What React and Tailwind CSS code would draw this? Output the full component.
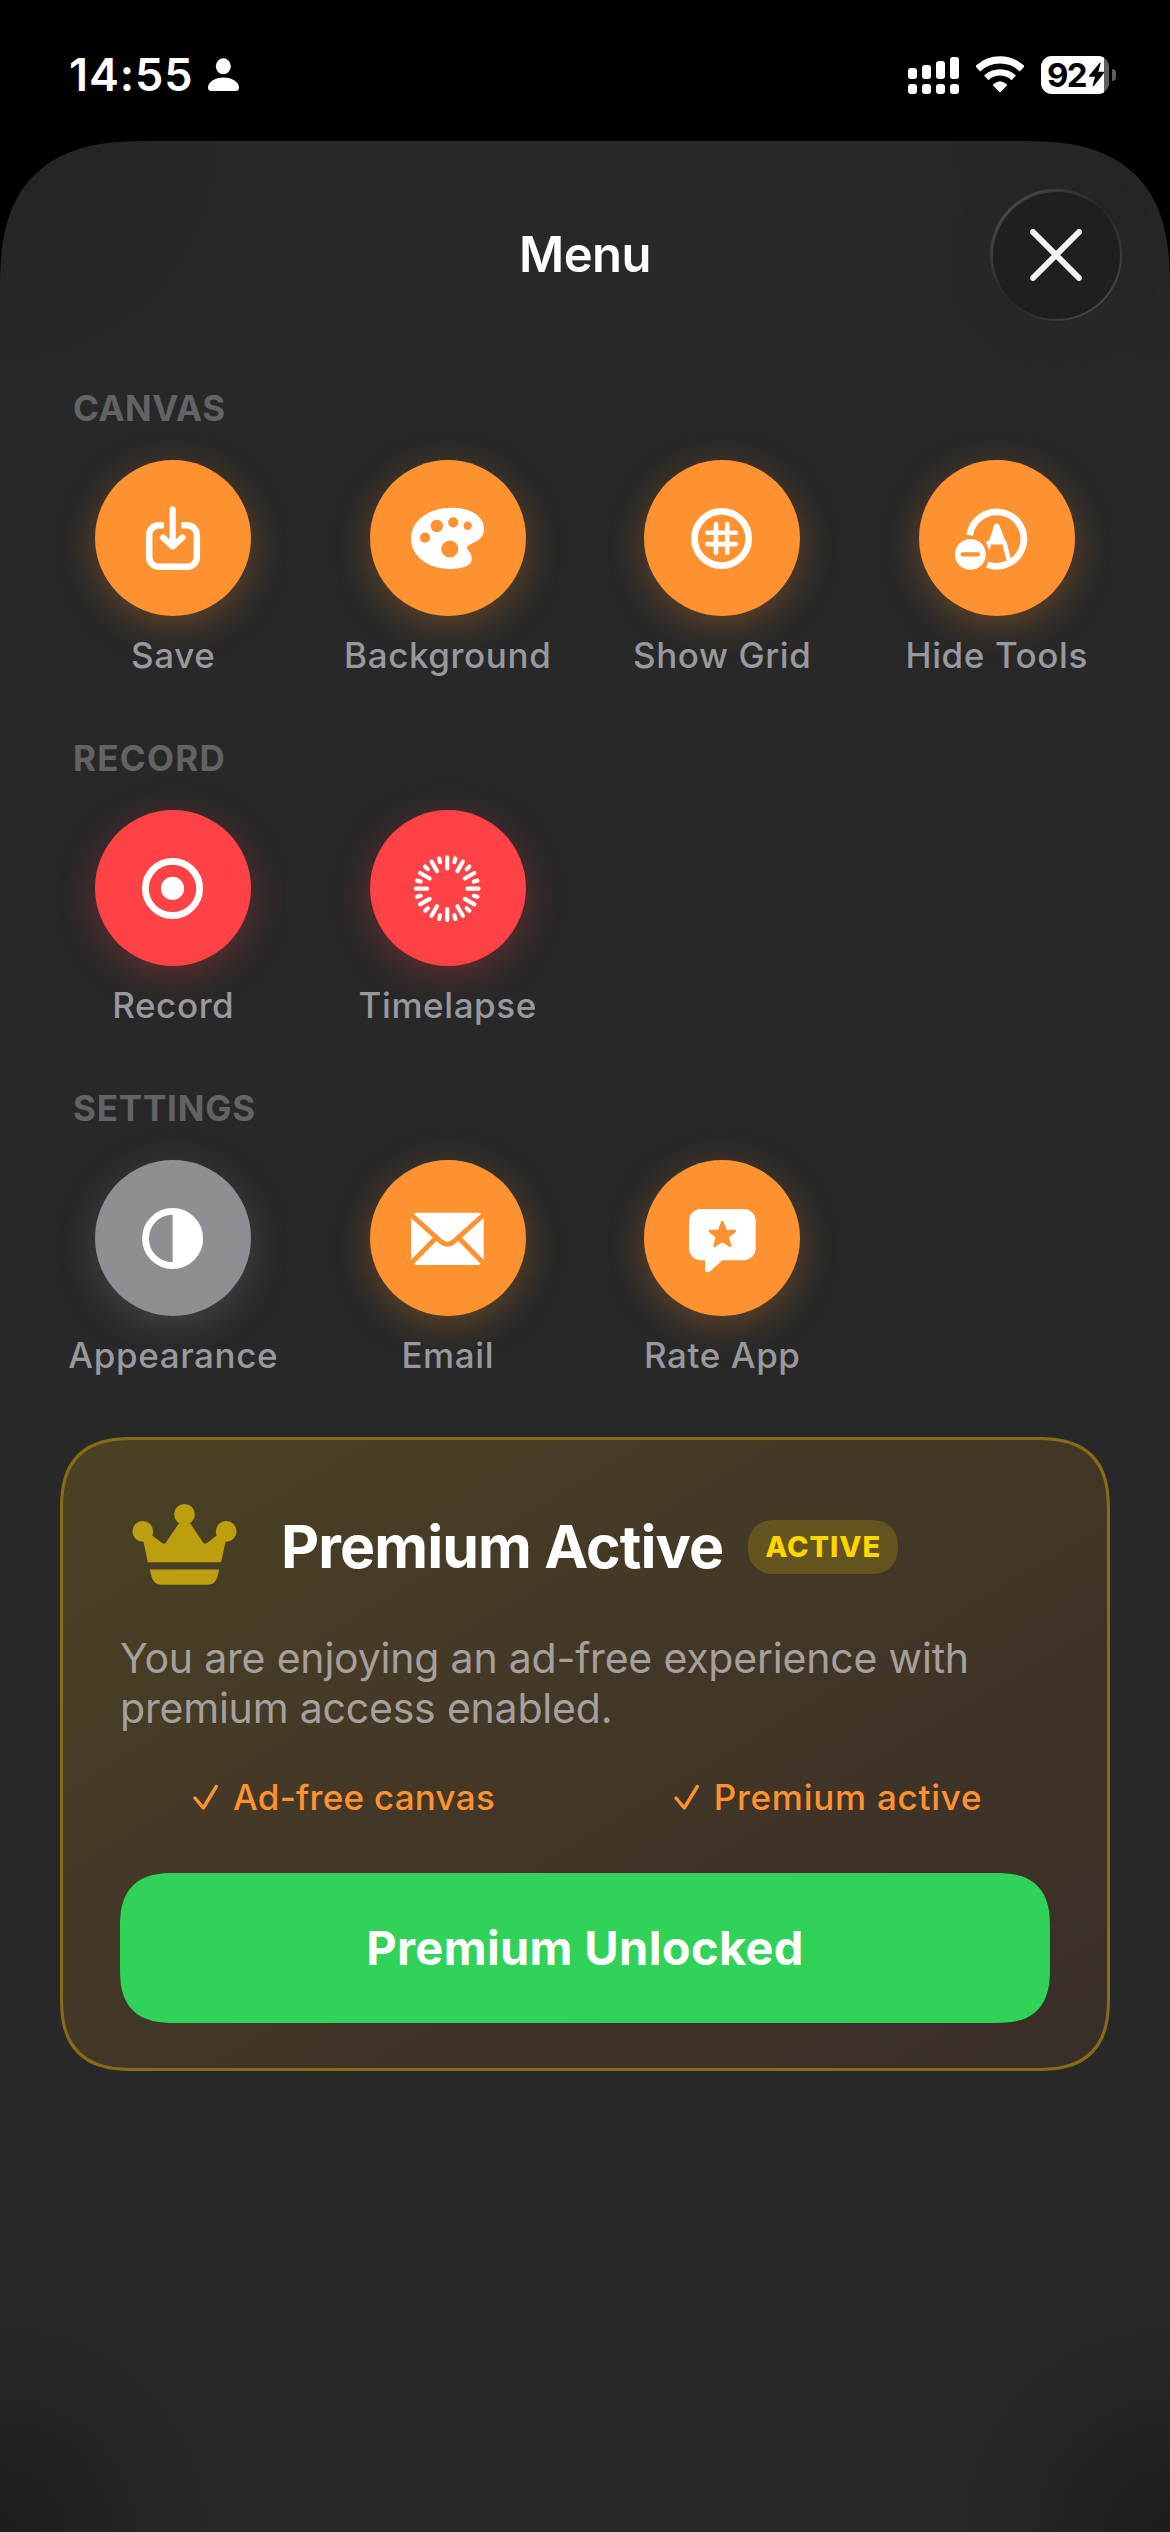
import React from "react";

const SaveIcon = () => (
  <g fill="none" stroke="white" strokeWidth="6.5">
    <path d="M69 65.3H64A9.8 9.8 0 0 0 54.2 75V97A9.8 9.8 0 0 0 64 106.8H92A9.8 9.8 0 0 0 101.8 97V75A9.8 9.8 0 0 0 92 65.3H86.3" />
    <path d="M77.7 49.3V86M68 77.5L77.7 86.6L87.4 77.5" strokeLinecap="round" strokeLinejoin="round" strokeWidth="6.2" />
  </g>
);

const PaletteIcon = ({ color }) => (
  <g>
    <path
      fill="white"
      d="M41 79C41 61 58 47.7 82 47.7C101 47.7 114 56.5 114 69C114 80 104 82 99 85C96.5 86.5 96.8 88.5 98 90C100 92.5 101.8 95 101.8 99C101.8 105.5 93 109 80 109C57 109 41 95 41 79Z"
    />
    <g fill={color}>
      <circle cx="79.8" cy="89" r="8.6" />
      <circle cx="66.8" cy="66" r="6.2" />
      <circle cx="83.2" cy="62.3" r="5.1" />
      <circle cx="97.7" cy="65.7" r="4.2" />
      <circle cx="55" cy="77.7" r="5.1" />
    </g>
  </g>
);

const GridIcon = () => (
  <g fill="none" stroke="white">
    <circle cx="77.6" cy="78.5" r="27.1" strokeWidth="6.8" />
    <path d="M72 64V92.7M83.2 64V92.7M63.3 72.7H91.8M63.3 84.1H91.8" strokeWidth="4.6" strokeLinecap="round" />
  </g>
);

const HideToolsIcon = ({ color }) => (
  <g>
    <path d="M50.7 75.2A27.2 27.2 0 1 1 68.3 104.6" fill="none" stroke="white" strokeWidth="6.7" />
    <path
      fill="white"
      d="M77.7 63.5Q79.7 63.5 80.4 65.5L86.2 80.2L87.5 81.5L92.3 100.5L88.2 103.5L83.5 84.5H71.8L70.7 91L67 82.2L70.5 80L75 65.5Q75.7 63.5 77.7 63.5Z"
    />
    <circle cx="51.4" cy="94.4" r="15.4" fill="white" />
    <path d="M43.7 94.4H59" stroke={color} strokeWidth="4.3" strokeLinecap="round" />
  </g>
);

const RecordIcon = () => (
  <g>
    <circle cx="77.5" cy="78.4" r="27.1" fill="none" stroke="white" strokeWidth="6.8" />
    <circle cx="77.5" cy="78.4" r="11.6" fill="white" />
  </g>
);

const TimelapseIcon = () => (
  <g stroke="white" strokeWidth="4.2" strokeLinecap="round">
    {Array.from({ length: 24 }).map((_, i) => (
      <line
        key={i}
        x1="77.2"
        x2="77.2"
        y1="47.4"
        y2={i % 2 === 0 ? 58.4 : 51.2}
        transform={`rotate(${i * 15} 77.2 78.7)`}
      />
    ))}
  </g>
);

const AppearanceIcon = () => (
  <g>
    <circle cx="77.6" cy="78.5" r="27.1" fill="none" stroke="white" strokeWidth="6.8" />
    <path d="M77.6 49V108A29.5 29.5 0 0 0 77.6 49Z" fill="white" />
  </g>
);

const EmailIcon = ({ color }) => (
  <g>
    <rect x="41" y="52.7" width="72.7" height="52.2" rx="6" fill="white" />
    <g fill="none" stroke={color} strokeWidth="5">
      <path d="M38 52L71.5 82Q77.4 86.5 83.2 82L116.7 52" />
      <path d="M66.3 77.5L38 106.5M88.4 77.5L116.7 106.5" />
    </g>
  </g>
);

const RateIcon = ({ color }) => (
  <g>
    <path
      fill="white"
      d="M57 49H99.5A12 12 0 0 1 111.7 61V88.3A12 12 0 0 1 99.5 100.3H78.3L66.5 111Q61 114.5 61 109V100.3H57A12 12 0 0 1 45 88.3V61A12 12 0 0 1 57 49Z"
    />
    <path
      fill={color}
      stroke={color}
      strokeWidth="2.6"
      strokeLinejoin="round"
      d="M78.3 62.2L81.6 71H90.8L83.6 76.9L86 85.7L78.3 80.6L70.6 85.7L73 76.9L65.8 71H75Z"
    />
  </g>
);

const sections = [
  {
    title: "CANVAS",
    spacing: "tracking-[0.5px]",
    items: [
      { label: "Save", color: "#ff9230", Icon: SaveIcon },
      { label: "Background", color: "#ff9230", Icon: PaletteIcon },
      { label: "Show Grid", color: "#ff9230", Icon: GridIcon },
      { label: "Hide Tools", color: "#ff9230", Icon: HideToolsIcon },
    ],
  },
  {
    title: "RECORD",
    spacing: "tracking-[1.3px]",
    items: [
      { label: "Record", color: "#ff4245", Icon: RecordIcon },
      { label: "Timelapse", color: "#ff4245", Icon: TimelapseIcon },
    ],
  },
  {
    title: "SETTINGS",
    spacing: "tracking-[0.8px]",
    items: [
      { label: "Appearance", color: "#8e8e93", Icon: AppearanceIcon },
      { label: "Email", color: "#ff9230", Icon: EmailIcon },
      { label: "Rate App", color: "#ff9230", Icon: RateIcon },
    ],
  },
];

const circleStyles = {
  "#ff9230": "bg-[#ff9230] shadow-[0_9px_36px_rgba(255,146,48,0.28)]",
  "#ff4245": "bg-[#ff4245] shadow-[0_9px_36px_rgba(255,66,69,0.28)]",
  "#8e8e93": "bg-[#8e8e93] shadow-[0_9px_36px_rgba(142,142,147,0.28)]",
};

const StatusBar = () => (
  <div className="flex h-[141px] items-center justify-between pt-2 pl-[69px] pr-[54px]">
    <div className="flex items-center">
      <span className="w-[139px] text-[45px] leading-[54px] font-semibold tracking-[0.9px]">14:55</span>
      <svg className="h-[33px] w-[31px]" viewBox="0 0 31 33" fill="white">
        <ellipse cx="15.3" cy="8.3" rx="7.5" ry="8" />
        <path d="M15.5 19.5C24 19.5 31 24 31 29.5C31 31.5 30 33 28 33H3C1 33 0 31.5 0 29.5C0 24 7 19.5 15.5 19.5Z" />
      </svg>
    </div>
    <div className="flex items-center">
      <svg className="h-[38px] w-[51px]" viewBox="0 0 51 38" fill="white">
        <rect x="0" y="12" width="9" height="11" rx="3" />
        <rect x="14" y="9" width="9" height="14" rx="3" />
        <rect x="28" y="5" width="9" height="18" rx="3" />
        <rect x="42" y="1" width="9" height="22" rx="3" />
        <rect x="0" y="28" width="9" height="10" rx="3" />
        <rect x="14" y="28" width="9" height="10" rx="3" />
        <rect x="28" y="28" width="9" height="10" rx="3" />
        <rect x="42" y="28" width="9" height="10" rx="3" />
      </svg>
      <svg className="ml-[17px] h-[38px] w-[48px]" viewBox="0 0 48 38" fill="none" stroke="white">
        <path d="M1.8 12.8A32.3 32.3 0 0 1 46.2 12.8" strokeWidth="7.2" />
        <path d="M10.3 21.8A20 20 0 0 1 37.7 21.8" strokeWidth="6.4" />
        <path d="M24 36L17 29Q24 22.5 31 29Z" fill="white" strokeWidth="0.8" strokeLinejoin="round" />
      </svg>
      <div className="ml-[17px] flex h-[38px] w-[68px] overflow-hidden rounded-[11px] bg-[#5f5f5f]">
        <div className="flex h-full w-[63px] items-center bg-white pl-1.5 text-black">
          <span className="text-[33px] leading-[38px] font-bold tracking-[-1.8px]">92</span>
          <svg className="ml-[2px] h-[25px] w-[17px] shrink-0" viewBox="0 0 16 25">
            <path d="M11.5 0.5Q12.5 0.5 12 2L9.8 9.8H15Q16 10.2 15.3 11.3L5.3 24Q3.8 25 4.2 23.3L6.5 14.8H1.2Q0 14.3 0.8 13.2Z" fill="black" />
          </svg>
        </div>
      </div>
      <div className="ml-[3px] h-[12px] w-1 rounded-r-full bg-[#5f5f5f]" />
    </div>
  </div>
);

const MenuItem = ({ item }) => {
  const { label, color, Icon } = item;
  return (
    <button className="flex flex-col items-center">
      <span className={`h-[156px] w-[156px] rounded-full ${circleStyles[color]}`}>
        <svg className="h-full w-full" viewBox="0 0 156 156">
          <Icon color={color} />
        </svg>
      </span>
      <span className="mt-[18px] text-[35px] leading-[42px] font-medium tracking-[0.6px] whitespace-nowrap text-[#98989f]">
        {label}
      </span>
    </button>
  );
};

const Benefit = ({ text, spacing }) => (
  <div className="flex flex-1 items-center justify-center pl-0.5">
    <svg className="h-[26px] w-[25px]" viewBox="0 0 25 26" fill="none" stroke="currentColor">
      <path d="M2 14L10.3 24L23.3 2.5" strokeWidth="3.4" strokeLinecap="round" strokeLinejoin="round" />
    </svg>
    <span className={`ml-[15px] text-[35px] leading-[42px] font-medium whitespace-nowrap ${spacing}`}>{text}</span>
  </div>
);

const PremiumCard = () => (
  <div className="mx-[60px] mt-[61px] h-[634px] rounded-[75px] [corner-shape:superellipse(1.4)] border-[3px] border-[#866c19] bg-linear-to-br from-[#4b4223] via-[#423627] to-[#392e28] px-[57px] pt-16">
    <div className="flex h-[86px] items-center">
      <svg className="mb-[5px] ml-3 h-[81px] w-[105px] shrink-0" viewBox="0 0 105 81" fill="#bb9f0e">
        <circle cx="10.8" cy="27.4" r="10.4" />
        <circle cx="52.5" cy="10.4" r="10.4" />
        <circle cx="94.2" cy="27.4" r="10.4" />
        <path d="M11.3 37L15.9 58.3H89.1L93.7 37L84.8 31.5L74.5 39.3Q72.5 40.5 71.2 38.8L58.3 19.5H46.7L33.8 38.8Q32.5 40.5 30.5 39.3L20.2 31.5Z" />
        <path d="M17.8 65.5H87.2L85.5 72.5Q83.3 80.8 75.5 80.8H29.5Q21.7 80.8 19.5 72.5Z" />
      </svg>
      <h2 className="ml-11 text-[59px] leading-[72px] font-bold tracking-[-0.9px] whitespace-nowrap text-white">
        Premium Active
      </h2>
      <span className="ml-[25px] h-[54px] w-[150px] rounded-[27px] [corner-shape:superellipse(1.2)] bg-[#ffd600]/18 pl-[17px] text-[29px] leading-[54px] font-extrabold tracking-[0.9px] text-[#ffd600]">
        ACTIVE
      </span>
    </div>
    <p className="mt-[43px] text-[41px] leading-[50px] tracking-[-0.2px] whitespace-nowrap text-[#a5a09d]">
      You are enjoying an ad-free experience with
      <br />
      premium access enabled.
    </p>
    <div className="mt-[43px] flex gap-[38px] text-[#ff9230]">
      <Benefit text="Ad-free canvas" spacing="tracking-[0.25px]" />
      <Benefit text="Premium active" spacing="tracking-[0.75px]" />
    </div>
    <button className="mt-[55px] h-[150px] w-full rounded-[55px] [corner-shape:superellipse(1.4)] bg-[#30d259] text-[47px] font-bold tracking-[0.35px] text-white">
      Premium Unlocked
    </button>
  </div>
);

const App = () => {
  return (
    <div className="h-[2532px] w-[1170px] overflow-hidden bg-black font-['Inter',sans-serif] text-white">
      <StatusBar />
      <div className="h-[2391px] rounded-t-[148px] [corner-shape:superellipse(1.4)] bg-[#282828] bg-[radial-gradient(circle_at_0%_100%,#1d1d1d,transparent_205px),radial-gradient(circle_at_100%_100%,#1d1d1d,transparent_205px),radial-gradient(circle_at_0%_0%,#242424,transparent_220px),radial-gradient(circle_at_100%_0%,#242424,transparent_220px)] pt-12">
        <div className="grid grid-cols-[132px_1fr_132px] items-center px-12">
          <span />
          <h1 className="text-center text-[49px] leading-[60px] font-semibold tracking-[-0.6px]">Menu</h1>
          <button className="h-[132px] w-[132px] rounded-full bg-linear-to-br from-[#555] via-[#252525] to-[#555] p-[2.5px] shadow-[0_6px_60px_rgba(0,0,0,0.06)]">
            <span className="flex h-full w-full items-center justify-center rounded-full bg-[#1e1f1f]">
              <svg className="h-[52px] w-[52px]" viewBox="0 0 52 52">
                <path d="M3 3L49 49M49 3L3 49" stroke="#f3f3f3" strokeWidth="6" strokeLinecap="round" />
              </svg>
            </span>
          </button>
        </div>

        <div className="mt-[66px] flex flex-col gap-[61px]">
          {sections.map((section) => (
            <div key={section.title}>
              <h3 className={`mb-[31px] pl-[73px] text-[35px] leading-[42px] font-bold text-[#636366] ${section.spacing}`}>
                {section.title}
              </h3>
              <div className="grid grid-cols-4 px-9">
                {section.items.map((item) => (
                  <MenuItem key={item.label} item={item} />
                ))}
              </div>
            </div>
          ))}
        </div>

        <PremiumCard />
      </div>
    </div>
  );
};

export default App;
